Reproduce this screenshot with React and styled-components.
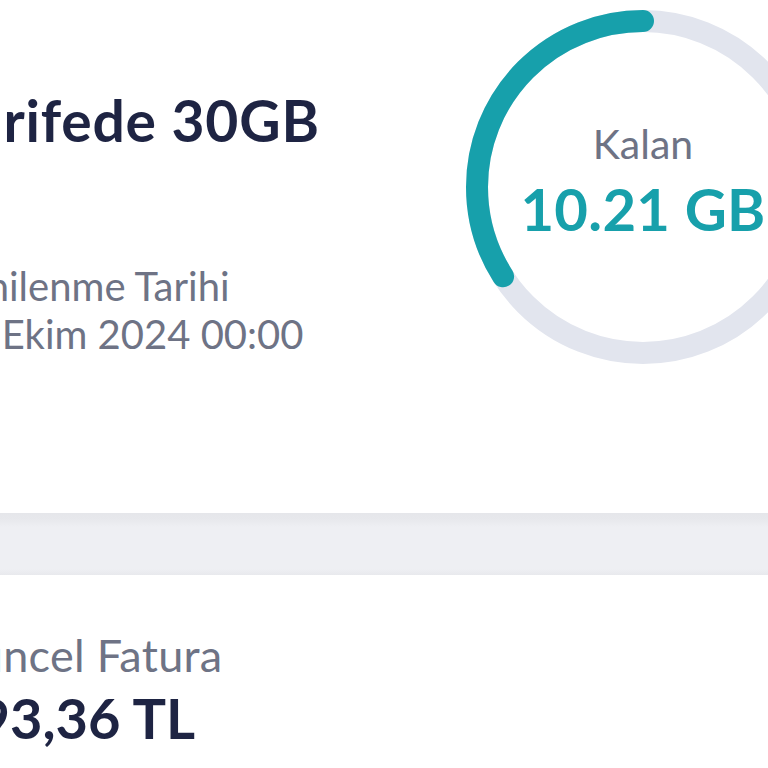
import React from 'react';
import styled, { createGlobalStyle } from 'styled-components';

const GlobalStyle = createGlobalStyle`
  html, body {
    margin: 0;
    padding: 0;
    background: #ffffff;
    overflow: hidden;
  }
  body {
    font-family: 'Lato', 'Noto Sans', sans-serif;
  }
`;

const Page = styled.div`
  width: 900px;
  margin-left: -55px;
`;

const TopSection = styled.section`
  display: flex;
  align-items: flex-start;
  padding: 10px 0 149px 0;
`;

const Info = styled.div`
  flex: 0 0 521px;
  padding-top: 76px;
`;

const Title = styled.h1`
  margin: 0 0 108px 0;
  font-size: 57px;
  line-height: 68px;
  font-weight: 700;
  letter-spacing: 0.8px;
  color: #1e2443;
  white-space: nowrap;
`;

const Muted = styled.div`
  font-size: ${p => p.size || 40}px;
  line-height: ${p => p.lh || 48}px;
  letter-spacing: ${p => p.spacing || 0}px;
  color: #6e7385;
  white-space: nowrap;
`;

const Ring = styled.div`
  display: grid;
  width: 354px;
  height: 354px;
  flex: 0 0 354px;
  & > * {
    grid-area: 1 / 1;
  }
`;

const RingText = styled.div`
  display: flex;
  flex-direction: column;
  align-items: center;
  padding-top: 110px;
`;

const Remaining = styled.div`
  margin-top: 9px;
  font-size: 58px;
  line-height: 64px;
  font-weight: 700;
  letter-spacing: 0.3px;
  color: #17a0ab;
  white-space: nowrap;
`;

const Divider = styled.div`
  height: 62px;
  background: linear-gradient(#e5e6ea 0px, #e7e8ec 6px, #eeeff3 14px, #eeeff3 56px, #e8e9ed 62px);
`;

const BottomSection = styled.section`
  padding-top: 54px;
`;

const Amount = styled.div`
  font-size: 56px;
  line-height: 60px;
  font-weight: 700;
  color: #1e2443;
  margin-top: 7px;
  white-space: nowrap;
`;

const UsageRing = ({ used, total }) => {
  const r = 166;
  const c = 2 * Math.PI * r;
  const frac = used / total;
  return (
    <svg width="354" height="354" viewBox="0 0 354 354">
      <circle cx="177" cy="177" r={r} fill="none" stroke="#e2e5ee" strokeWidth="22" />
      <circle
        cx="177"
        cy="177"
        r={r}
        fill="none"
        stroke="#17a0ab"
        strokeWidth="22"
        strokeLinecap="round"
        strokeDasharray={`${c * frac} ${c}`}
        transform="translate(354 0) scale(-1 1) rotate(-90 177 177)"
      />
    </svg>
  );
};

export default function App() {
  return (
    <>
      <GlobalStyle />
      <Page>
        <TopSection>
          <Info>
            <Title>Tarifede 30GB</Title>
            <Muted>Yenilenme Tarihi</Muted>
            <Muted>15 Ekim 2024 00:00</Muted>
          </Info>
          <Ring>
            <UsageRing used={10.21} total={30} />
            <RingText>
              <Muted size={41}>Kalan</Muted>
              <Remaining>10.21 GB</Remaining>
            </RingText>
          </Ring>
        </TopSection>
        <Divider />
        <BottomSection>
          <Muted size={45} lh={52} spacing={0.3}>Güncel Fatura</Muted>
          <Amount>293,36 TL</Amount>
        </BottomSection>
      </Page>
    </>
  );
}
